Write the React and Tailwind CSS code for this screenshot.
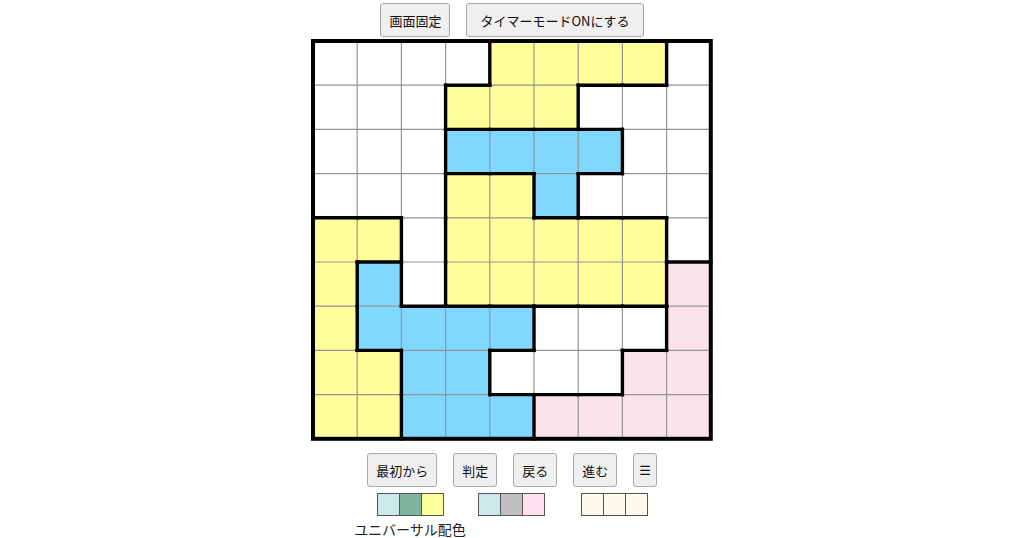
import React from "react";

const G = [
  "WWWWYYYYW",
  "WWWYYYWWW",
  "WWWBBBBWW",
  "WWWYYBWWW",
  "YYWYYYYYW",
  "YBWYYYYYP",
  "YBBBBWWWP",
  "YYBBWWWPP",
  "YYBBBPPPP",
];
const COL = { W: "#ffffff", Y: "#ffff99", B: "#80d8ff", P: "#fbe3eb" };
const S = 44.2;
const O = 2;

function Board() {
  const cells = [];
  const thin = [];
  const thick = [];
  for (let r = 0; r < 9; r++) {
    for (let c = 0; c < 9; c++) {
      cells.push(
        <rect key={`c${r}-${c}`} x={O + c * S} y={O + r * S} width={S} height={S} fill={COL[G[r][c]]} />
      );
    }
  }
  for (let i = 1; i < 9; i++) {
    thin.push(<line key={`v${i}`} x1={O + i * S} y1={O} x2={O + i * S} y2={O + 9 * S} stroke="#959595" strokeWidth="1.2" />);
    thin.push(<line key={`h${i}`} x1={O} y1={O + i * S} x2={O + 9 * S} y2={O + i * S} stroke="#959595" strokeWidth="1.2" />);
  }
  for (let r = 0; r < 9; r++) {
    for (let c = 0; c < 9; c++) {
      if (c < 8 && G[r][c] !== G[r][c + 1]) {
        const x = O + (c + 1) * S;
        thick.push(<line key={`tv${r}-${c}`} x1={x} y1={O + r * S} x2={x} y2={O + (r + 1) * S} stroke="#000" strokeWidth="3.4" strokeLinecap="square" />);
      }
      if (r < 8 && G[r][c] !== G[r + 1][c]) {
        const y = O + (r + 1) * S;
        thick.push(<line key={`th${r}-${c}`} x1={O + c * S} y1={y} x2={O + (c + 1) * S} y2={y} stroke="#000" strokeWidth="3.4" strokeLinecap="square" />);
      }
    }
  }
  return (
    <svg width="402" height="402" viewBox="0 0 402 402" className="block">
      {cells}
      {thin}
      {thick}
      <rect x={O} y={O} width={9 * S} height={9 * S} fill="none" stroke="#000" strokeWidth="4" />
    </svg>
  );
}

function Btn({ children, className = "px-[8px]" }) {
  return (
    <button
      className={`h-[34px] bg-[#efefef] border border-[#a8a8a8] rounded-[3px] text-[13px] text-[#111] leading-none whitespace-nowrap ${className}`}
    >
      {children}
    </button>
  );
}

function Swatches({ colors }) {
  return (
    <div className="flex">
      {colors.map((c, i) => (
        <div
          key={i}
          className={`w-[23px] h-[23px] border border-[#555] ${i > 0 ? "-ml-px" : ""}`}
          style={{ backgroundColor: c }}
        />
      ))}
    </div>
  );
}

export default function App() {
  return (
    <div
      className="w-[1024px] h-[538px] overflow-hidden bg-white flex flex-col items-center"
      style={{ fontFamily: '"Noto Sans CJK JP", "Noto Sans", "DejaVu Sans", sans-serif' }}
    >
      <div className="flex gap-[16px] mt-[3px]">
        <Btn>画面固定</Btn>
        <Btn className="px-[13px]">タイマーモードONにする</Btn>
      </div>
      <div className="mt-[2px]">
        <Board />
      </div>
      <div className="flex mt-[12px]">
        <Btn>最初から</Btn>
        <Btn className="ml-[16px] px-[8px]">判定</Btn>
        <Btn className="ml-[16px] px-[8px]">戻る</Btn>
        <Btn className="ml-[16px] px-[8px]">進む</Btn>
        <Btn className="ml-[16px] px-[5px]">
          <span style={{ fontFamily: '"DejaVu Sans", sans-serif' }}>☰</span>
        </Btn>
      </div>
      <div className="flex mt-[6px]">
        <div className="w-[114px] flex flex-col items-center">
          <Swatches colors={["#cce8e8", "#80b49c", "#ffff99"]} />
          <div className="text-[14px] leading-none mt-[6px] text-[#222] whitespace-nowrap">ユニバーサル配色</div>
        </div>
        <div className="ml-[11px]">
          <Swatches colors={["#cce8e8", "#c0c0c0", "#ffe0f0"]} />
        </div>
        <div className="ml-[36px] w-[90px]">
          <Swatches colors={["#fffaeb", "#fffaeb", "#fffaeb"]} />
        </div>
      </div>
    </div>
  );
}
